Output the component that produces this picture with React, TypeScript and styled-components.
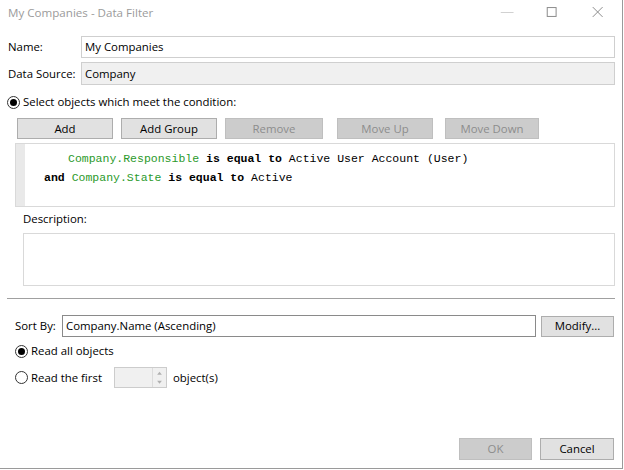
import React from 'react';
import styled, { createGlobalStyle } from 'styled-components';

const GlobalStyle = createGlobalStyle`
  body {
    margin: 0;
    background: #ffffff;
    font-family: "Open Sans", "Noto Sans", sans-serif;
    font-size: 11.4px;
    color: #000000;
  }
`;

const Window = styled.div`
  box-sizing: border-box;
  width: 623px;
  height: 469px;
  background: #ffffff;
  border-right: 1px solid #9a9a9a;
  border-bottom: 1px solid #9a9a9a;
  display: flex;
  flex-direction: column;
`;

const TitleBar = styled.div`
  height: 36px;
  display: flex;
  align-items: flex-start;
  padding: 5px 0 0 8px;
  box-sizing: border-box;
`;

const Title = styled.div`
  flex: 1;
  color: #9b9b9b;
  font-size: 11.6px;
  line-height: 16px;
`;

const Caption = styled.div`
  display: flex;
  width: 136px;
  height: 24px;
  margin: -5px 2px 0 0;
  & > svg {
    flex: 1;
    height: 24px;
  }
`;

const Body = styled.div`
  flex: 1;
  display: flex;
  flex-direction: column;
  padding: 0 7px 0 8px;
`;

const FieldRow = styled.div<{ $top?: number }>`
  display: flex;
  align-items: center;
  margin-top: ${(p) => p.$top ?? 0}px;
`;

const Label = styled.div<{ $width: number }>`
  width: ${(p) => p.$width}px;
  flex-shrink: 0;
  line-height: 16px;
`;

const TextBox = styled.div<{ $readOnly?: boolean; $dark?: boolean; $height?: number }>`
  flex: 1;
  box-sizing: border-box;
  height: ${(p) => p.$height ?? 22}px;
  border: 1px solid ${(p) => (p.$dark ? '#8a8a8a' : '#cfcfcf')};
  background: ${(p) => (p.$readOnly ? '#f0f0f0' : '#ffffff')};
  padding: 0 3px;
  display: flex;
  align-items: center;
  line-height: 16px;
`;

const RadioRow = styled.label<{ $top: number; $left?: number; $width?: number }>`
  display: flex;
  align-items: center;
  height: 16px;
  margin-top: ${(p) => p.$top}px;
  margin-left: ${(p) => p.$left ?? 0}px;
  width: ${(p) => (p.$width ? `${p.$width}px` : 'auto')};
  flex-shrink: 0;
  gap: 3px;
  line-height: 16px;
`;

const RadioDot = styled.span<{ $checked?: boolean }>`
  box-sizing: border-box;
  width: 13px;
  height: 13px;
  border-radius: 50%;
  border: 1px solid #333333;
  display: flex;
  align-items: center;
  justify-content: center;
  &::after {
    content: '';
    width: 7px;
    height: 7px;
    border-radius: 50%;
    background: ${(p) => (p.$checked ? '#000000' : 'transparent')};
  }
`;

const ButtonRow = styled.div`
  display: flex;
  margin: 8px 0 0 9px;
`;

const Button = styled.div<{ $width: number; $gap?: number; $disabled?: boolean }>`
  box-sizing: border-box;
  width: ${(p) => p.$width}px;
  height: 21px;
  margin-left: ${(p) => p.$gap ?? 0}px;
  background: ${(p) => (p.$disabled ? '#cccccc' : '#e1e1e1')};
  border: 1px solid ${(p) => (p.$disabled ? '#bfbfbf' : '#adadad')};
  color: ${(p) => (p.$disabled ? '#8d8d8d' : '#000000')};
  display: flex;
  align-items: center;
  justify-content: center;
  line-height: 16px;
`;

const ConditionBox = styled.div`
  box-sizing: border-box;
  height: 64px;
  margin: 4px 0 0 7px;
  border: 1px solid #d9d9d9;
  display: flex;
`;

const Gutter = styled.div`
  width: 9px;
  background: #e9e9e9;
`;

const Code = styled.div`
  flex: 1;
  padding-top: 5px;
  font-family: "Liberation Mono", "DejaVu Sans Mono", monospace;
  font-size: 11.5px;
  line-height: 19px;
  white-space: pre;
`;

const CodeLine = styled.div<{ $indent: number }>`
  padding-left: ${(p) => p.$indent}px;
`;

const Field = styled.span`
  color: #2b9a2b;
`;

const Keyword = styled.span`
  font-weight: bold;
`;

const DescLabel = styled.div`
  margin: 4px 0 0 15px;
  line-height: 16px;
`;

const DescBox = styled.div`
  box-sizing: border-box;
  height: 53px;
  margin: 6px 0 0 15px;
  border: 1px solid #d9d9d9;
`;

const Separator = styled.div`
  height: 1px;
  margin: 12px 0 0 -1px;
  background: #a0a0a0;
`;

const SortRow = styled.div`
  display: flex;
  align-items: center;
  margin: 16px 1px 0 7px;
`;

const Spinner = styled.div`
  box-sizing: border-box;
  width: 53px;
  height: 21px;
  margin-right: 6px;
  border: 1px solid #cccccc;
  background: #f0f0f0;
  display: flex;
  justify-content: flex-end;
`;

const SpinArrows = styled.div`
  width: 13px;
  border-left: 1px solid #dcdcdc;
  display: flex;
  flex-direction: column;
  & > svg {
    flex: 1;
    width: 13px;
  }
`;

const Footer = styled.div`
  margin: auto 1px 8px 0;
  display: flex;
  justify-content: flex-end;
  gap: 8px;
`;

const FooterButton = styled(Button)`
  height: 22px;
`;

export default function App() {
  return (
    <Window>
      <GlobalStyle />
      <TitleBar>
        <Title>My Companies - Data Filter</Title>
        <Caption>
          <svg viewBox="0 0 46 24">
            <line x1="17" y1="12.5" x2="30" y2="12.5" stroke="#d0d0d0" strokeWidth="1" />
          </svg>
          <svg viewBox="0 0 46 24">
            <rect x="18.5" y="7.5" width="9" height="9" fill="none" stroke="#8a8a8a" strokeWidth="1" />
          </svg>
          <svg viewBox="0 0 46 24">
            <path d="M18 7 L28 17 M28 7 L18 17" stroke="#8a8a8a" strokeWidth="1" />
          </svg>
        </Caption>
      </TitleBar>
      <Body>
        <FieldRow>
          <Label $width={73}>Name:</Label>
          <TextBox>My Companies</TextBox>
        </FieldRow>
        <FieldRow $top={4}>
          <Label $width={73}>Data Source:</Label>
          <TextBox $readOnly $height={23}>Company</TextBox>
        </FieldRow>
        <RadioRow $top={9} $left={-1}>
          <RadioDot $checked />
          Select objects which meet the condition:
        </RadioRow>
        <ButtonRow>
          <Button $width={96}>Add</Button>
          <Button $width={96} $gap={8}>Add Group</Button>
          <Button $width={98} $gap={8} $disabled>Remove</Button>
          <Button $width={96} $gap={14} $disabled>Move Up</Button>
          <Button $width={94} $gap={12} $disabled>Move Down</Button>
        </ButtonRow>
        <ConditionBox>
          <Gutter />
          <Code>
            <CodeLine $indent={43}>
              <Field>Company.Responsible</Field> <Keyword>is equal to</Keyword> Active User Account (User)
            </CodeLine>
            <CodeLine $indent={19}>
              <Keyword>and</Keyword> <Field>Company.State</Field> <Keyword>is equal to</Keyword> Active
            </CodeLine>
          </Code>
        </ConditionBox>
        <DescLabel>Description:</DescLabel>
        <DescBox />
        <Separator />
        <SortRow>
          <Label $width={47}>Sort By:</Label>
          <TextBox $dark>Company.Name (Ascending)</TextBox>
          <Button $width={73} $gap={5}>Modify...</Button>
        </SortRow>
        <RadioRow $top={6} $left={7}>
          <RadioDot $checked />
          Read all objects
        </RadioRow>
        <FieldRow $top={8}>
          <RadioRow $top={0} $left={7} $width={99}>
            <RadioDot />
            Read the first
          </RadioRow>
          <Spinner>
            <SpinArrows>
              <svg viewBox="0 0 13 10">
                <path d="M4 7 L6.5 4 L9 7 Z" fill="#b0b0b0" />
              </svg>
              <svg viewBox="0 0 13 10">
                <path d="M4 3 L6.5 6 L9 3 Z" fill="#b0b0b0" />
              </svg>
            </SpinArrows>
          </Spinner>
          <span>object(s)</span>
        </FieldRow>
        <Footer>
          <FooterButton $width={73} $disabled>OK</FooterButton>
          <FooterButton $width={74}>Cancel</FooterButton>
        </Footer>
      </Body>
    </Window>
  );
}
